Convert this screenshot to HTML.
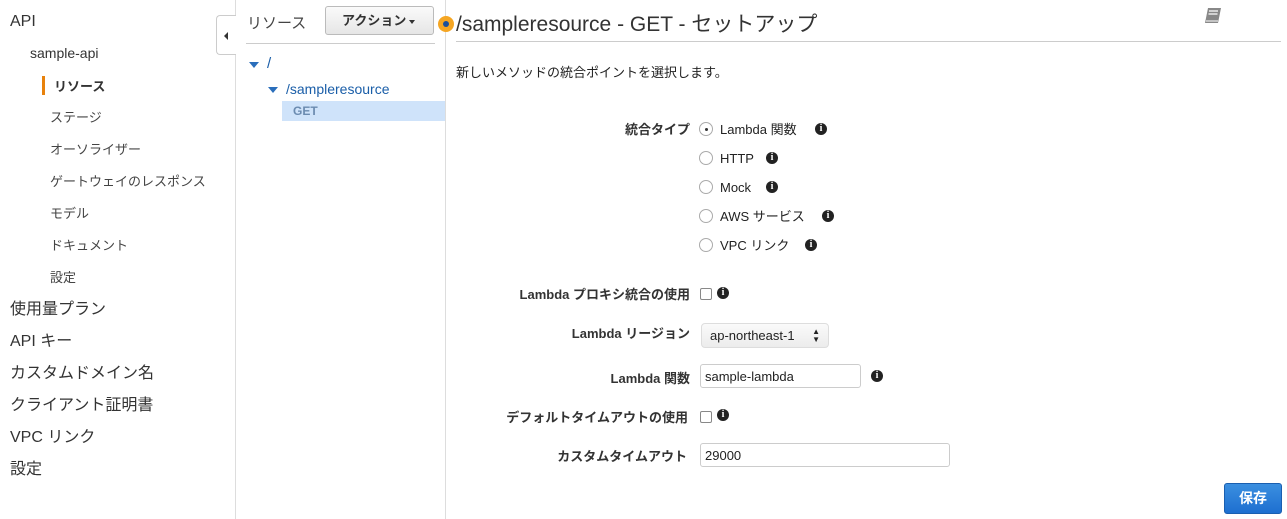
<!DOCTYPE html>
<html><head><meta charset="utf-8"><style>
*{margin:0;padding:0;box-sizing:border-box}
body{width:1287px;height:519px;background:#fff;font-family:"Liberation Sans","Noto Sans CJK JP",sans-serif;color:#333;position:relative;overflow:hidden;line-height:16px}
.a{position:absolute;white-space:nowrap}
.nav1{font-size:16px;color:#333;line-height:18px;margin-top:2px}
.nav3{font-size:13px;color:#444;margin-top:2px}
.lbl{font-size:13px;font-weight:bold;color:#333;text-align:right;width:240px;margin-top:2px}
.info{display:inline-block;width:12px;height:12px;border-radius:50%;background:#222;color:#fff;font:bold 10px/12px "Liberation Serif",serif;text-align:center;position:absolute}
.radio{position:absolute;width:14px;height:14px;border:1px solid #aaa;border-radius:50%;background:#fff}
.cb{position:absolute;width:12px;height:12px;border:1px solid #888;border-radius:2px;background:#fff}
.opt{font-size:13px;color:#222;margin-top:2px}
.inp{position:absolute;border:1px solid #ccc;border-radius:3px;height:24px;font-size:13px;padding:4px 4px 0;color:#222}
</style></head><body>
<div style="position:absolute;left:235px;top:0;width:1px;height:519px;background:#ddd"></div>
<div class="a nav1" style="left:10px;top:11px">API</div>
<div class="a" style="left:30px;top:45px;font-size:14px">sample-api</div>
<div class="a" style="left:42px;top:76px;width:3px;height:19px;background:#e8820c"></div>
<div class="a nav3" style="left:54px;top:77px;font-weight:bold;color:#333">リソース</div>
<div class="a nav3" style="left:50px;top:108px">ステージ</div>
<div class="a nav3" style="left:50px;top:140px">オーソライザー</div>
<div class="a nav3" style="left:50px;top:172px">ゲートウェイのレスポンス</div>
<div class="a nav3" style="left:50px;top:204px">モデル</div>
<div class="a nav3" style="left:50px;top:236px">ドキュメント</div>
<div class="a nav3" style="left:50px;top:268px">設定</div>
<div class="a nav1" style="left:10px;top:299px">使用量プラン</div>
<div class="a nav1" style="left:10px;top:331px">API キー</div>
<div class="a nav1" style="left:10px;top:363px">カスタムドメイン名</div>
<div class="a nav1" style="left:10px;top:395px">クライアント証明書</div>
<div class="a nav1" style="left:10px;top:427px">VPC リンク</div>
<div class="a nav1" style="left:10px;top:459px">設定</div>
<div class="a" style="left:216px;top:15px;width:20px;height:40px;border:1px solid #ccc;border-right:none;border-radius:4px 0 0 4px;background:#fff"></div>
<div class="a" style="left:224px;top:32px;width:0;height:0;border-top:4px solid transparent;border-bottom:4px solid transparent;border-right:4px solid #333"></div>
<div style="position:absolute;left:445px;top:0;width:1px;height:519px;background:#ddd"></div>
<div class="a" style="left:247px;top:15px;font-size:15px;color:#444;line-height:18px">リソース</div>
<div class="a" style="left:325px;top:6px;width:109px;height:29px;border:1px solid #bbb;border-radius:3px;background:linear-gradient(#fafafa,#e6e6e6);font-size:13px;font-weight:bold;color:#333;padding:6px 0 0 16px">アクション<span style="display:inline-block;margin-left:3px;border-left:3px solid transparent;border-right:3px solid transparent;border-top:4px solid #333;vertical-align:middle"></span></div>
<div class="a" style="left:246px;top:43px;width:189px;height:1px;background:#ccc"></div>
<div class="a" style="left:249px;top:62px;border-left:5px solid transparent;border-right:5px solid transparent;border-top:6px solid #2a6ebb"></div>
<div class="a" style="left:267px;top:55px;font-size:15px;color:#1a5ea8;line-height:18px">/</div>
<div class="a" style="left:268px;top:87px;border-left:5px solid transparent;border-right:5px solid transparent;border-top:6px solid #2a6ebb"></div>
<div class="a" style="left:286px;top:80px;font-size:14px;color:#1a5ea8;line-height:18px">/sampleresource</div>
<div class="a" style="left:282px;top:101px;width:163px;height:20px;background:#cfe3fa"></div>
<div class="a" style="left:293px;top:103px;font-size:12px;font-weight:bold;color:#6b8bb0">GET</div>
<div class="a" style="left:438px;top:16px;width:16px;height:16px;border-radius:50%;background:#f5a623"></div>
<div class="a" style="left:443px;top:21px;width:6px;height:6px;border-radius:50%;background:#1a4f9c"></div>
<div class="a" style="left:456px;top:12px;font-size:21px;color:#333;line-height:26px">/sampleresource - GET - セットアップ</div>
<div class="a" style="left:456px;top:41px;width:825px;height:1px;background:#ccc"></div>
<svg class="a" style="left:1203px;top:6px" width="20" height="20" viewBox="0 0 20 20"><path d="M5 2h13l-3 15H2z" fill="#888"/><path d="M6 5h9M5.5 8h9" stroke="#fff" stroke-width="1.3"/><path d="M3 15h12" stroke="#fff" stroke-width="1"/></svg>
<div class="a" style="left:456px;top:65px;font-size:13px;color:#222">新しいメソッドの統合ポイントを選択します。</div>
<div class="a lbl" style="left:450px;top:120px">統合タイプ</div>
<div class="radio" style="left:699px;top:122px"></div><div class="a" style="left:705px;top:128px;width:3px;height:3px;border-radius:50%;background:#333"></div>
<div class="a opt" style="left:720px;top:120px">Lambda 関数</div><span class="info" style="left:815px;top:123px">i</span>
<div class="radio" style="left:699px;top:151px"></div>
<div class="a opt" style="left:720px;top:149px">HTTP</div><span class="info" style="left:766px;top:152px">i</span>
<div class="radio" style="left:699px;top:180px"></div>
<div class="a opt" style="left:720px;top:178px">Mock</div><span class="info" style="left:766px;top:181px">i</span>
<div class="radio" style="left:699px;top:209px"></div>
<div class="a opt" style="left:720px;top:207px">AWS サービス</div><span class="info" style="left:822px;top:210px">i</span>
<div class="radio" style="left:699px;top:238px"></div>
<div class="a opt" style="left:720px;top:236px">VPC リンク</div><span class="info" style="left:805px;top:239px">i</span>
<div class="a lbl" style="left:450px;top:285px">Lambda プロキシ統合の使用</div>
<div class="cb" style="left:700px;top:288px"></div><span class="info" style="left:717px;top:287px">i</span>
<div class="a lbl" style="left:450px;top:324px">Lambda リージョン</div>
<div class="a" style="left:701px;top:323px;width:128px;height:25px;border:1px solid #ddd;border-radius:4px;background:linear-gradient(#fafafa,#ececec);font-size:13px;color:#222;padding:4px 8px">ap-northeast-1<span style="position:absolute;right:8px;top:4px;font-size:8px;line-height:8px">▲<br>▼</span></div>
<div class="a lbl" style="left:450px;top:369px">Lambda 関数</div>
<div class="inp" style="left:700px;top:364px;width:161px">sample-lambda</div><span class="info" style="left:871px;top:370px">i</span>
<div class="a lbl" style="left:448px;top:408px">デフォルトタイムアウトの使用</div>
<div class="cb" style="left:700px;top:411px"></div><span class="info" style="left:717px;top:409px">i</span>
<div class="a lbl" style="left:447px;top:447px">カスタムタイムアウト</div>
<div class="inp" style="left:700px;top:443px;width:250px">29000</div>
<div class="a" style="left:1224px;top:483px;width:58px;height:31px;border:1px solid #1a5fb0;border-radius:3px;background:linear-gradient(#3b8fe0,#1e6fd0);color:#fff;font-size:14px;font-weight:bold;text-align:center;line-height:29px">保存</div>
</body></html>
